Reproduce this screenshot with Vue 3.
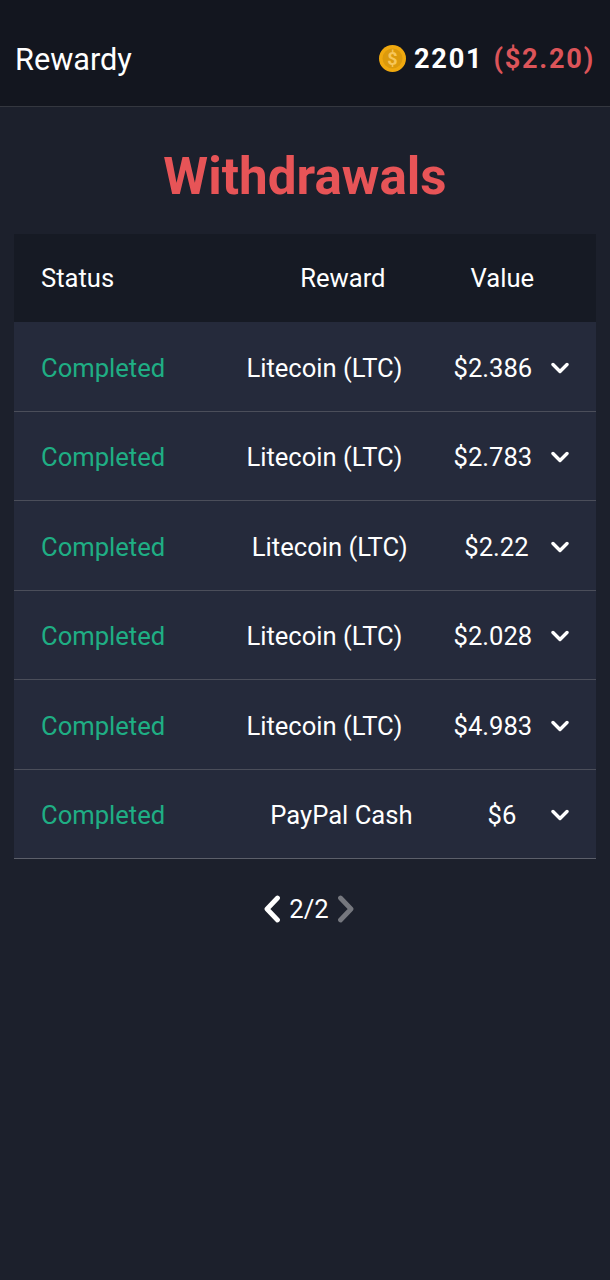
<script setup>
const rows = [
  { reward: "Litecoin (LTC)", value: "$2.386" },
  { reward: "Litecoin (LTC)", value: "$2.783" },
  { reward: "Litecoin (LTC)", value: "$2.22" },
  { reward: "Litecoin (LTC)", value: "$2.028" },
  { reward: "Litecoin (LTC)", value: "$4.983" },
  { reward: "PayPal Cash", value: "$6" },
]
</script>

<template>
  <div class="page">
    <header class="topbar">
      <span class="brand">Rewardy</span>
      <div class="balance">
        <svg class="coin" width="27" height="27" viewBox="0 0 27 27">
          <circle cx="13.5" cy="13.5" r="13.5" fill="#f0a90f" />
          <circle cx="13.5" cy="13.5" r="10" fill="#dc9a0c" />
          <text x="13.5" y="19.5" text-anchor="middle" class="coin-sign">$</text>
        </svg>
        <span class="points">2201</span>
        <span class="money">($2.20)</span>
      </div>
    </header>

    <h1 class="title">Withdrawals</h1>

    <section class="table">
      <div class="head">
        <span>Status</span>
        <span class="head-reward">Reward</span>
        <span class="head-value">Value</span>
      </div>
      <div v-for="(row, i) in rows" :key="i" class="row">
        <span class="status">Completed</span>
        <span class="reward">{{ row.reward }}</span>
        <span class="value">{{ row.value }}</span>
        <svg class="chevron" width="18" height="12" viewBox="0 0 18 12">
          <path d="M2 2.5 9 9.5 16 2.5" fill="none" stroke="#fff" stroke-width="3.4" stroke-linecap="round" stroke-linejoin="round" />
        </svg>
      </div>
    </section>

    <nav class="pager">
      <svg width="18" height="28" viewBox="0 0 18 28">
        <path d="M14.5 3 4 14 14.5 25" fill="none" stroke="#fff" stroke-width="4.8" stroke-linecap="round" stroke-linejoin="round" />
      </svg>
      <span class="pager-text">2/2</span>
      <svg width="18" height="28" viewBox="0 0 18 28">
        <path d="M3.5 3 14 14 3.5 25" fill="none" stroke="#75777e" stroke-width="4.8" stroke-linecap="round" stroke-linejoin="round" />
      </svg>
    </nav>
  </div>
</template>

<style>
html,
body {
  background: #1c202c;
}
</style>

<style scoped>
.page {
  min-height: 1280px;
  background: #1c202c;
  color: #fff;
  font-family: Roboto, "Liberation Sans", sans-serif;
}
.topbar {
  display: flex;
  justify-content: space-between;
  align-items: center;
  box-sizing: border-box;
  height: 107px;
  padding: 12px 15px 0;
  background: #13161f;
  border-bottom: 1px solid #34373f;
}
.brand {
  font-size: 30.7px;
}
.balance {
  display: flex;
  align-items: center;
  margin-top: -1px;
  font-size: 27.2px;
  font-weight: 700;
  letter-spacing: 1.75px;
}
.coin {
  margin-right: 8px;
}
.coin-sign {
  font-size: 18px;
  font-weight: 700;
  fill: #f7c65a;
  letter-spacing: 0;
}
.money {
  margin-left: 10px;
  color: #dc5459;
}
.title {
  margin: 0;
  padding: 38px 0 26px;
  font-size: 51.2px;
  line-height: 63px;
  font-weight: 700;
  text-align: center;
  color: #e75457;
}
.table {
  margin: 0 14px;
}
.head {
  display: flex;
  align-items: center;
  height: 88px;
  padding: 0 27px;
  background: #161a24;
  font-size: 25.6px;
}
.head-reward {
  margin-left: 186px;
}
.head-value {
  margin-left: 85px;
}
.row {
  display: flex;
  align-items: center;
  box-sizing: border-box;
  height: 89.5px;
  padding: 3px 27px 0;
  background: #252a3b;
  border-bottom: 1px solid #4b4e5a;
  font-size: 25.6px;
}
.row:last-child {
  border-bottom-color: #5c5f6a;
}
.status {
  flex: 1 0 auto;
  margin-right: 53px;
  color: #1fae84;
}
.reward {
  flex: 1 0 auto;
  margin-right: 23px;
  text-align: center;
}
.value {
  flex: 2 0 auto;
  text-align: center;
}
.chevron {
  flex: none;
}
.pager {
  display: flex;
  justify-content: center;
  align-items: center;
  gap: 8px;
  margin-left: 8px;
  padding-top: 35px;
}
.pager-text {
  font-size: 25.6px;
}
</style>
